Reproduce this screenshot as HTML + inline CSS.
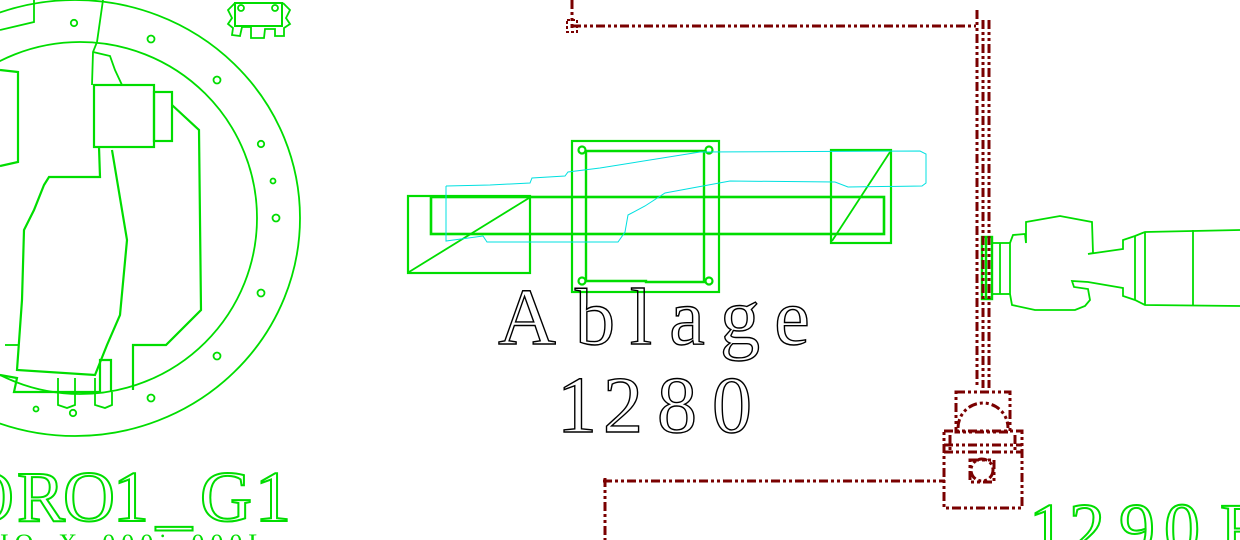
<!DOCTYPE html>
<html><head><meta charset="utf-8"><style>
html,body{margin:0;padding:0;background:#fff;width:1240px;height:540px;overflow:hidden}
svg{display:block}
</style></head><body>
<svg width="1240" height="540" viewBox="0 0 1240 540" xmlns="http://www.w3.org/2000/svg">
<g fill="none" stroke="#00dd00" stroke-width="1.8">
 <ellipse cx="75" cy="218" rx="225" ry="218"/>
 <ellipse cx="80" cy="218" rx="177" ry="176"/>
 <rect x="94" y="85" width="60" height="62" stroke-width="2.2"/>
 <rect x="154" y="92" width="18" height="49" stroke-width="2.2"/>
 <polyline points="172,105 199,130 201,310 166,345 133,345 133,390" stroke-width="2.2"/>
 <polyline points="103,0 97,42 93,52 92,85"/>
 <polyline points="0,30 34,22 34,0"/>
 <polyline points="0,70 18,72 18,162 0,166" stroke-width="2.2"/>
 <polyline points="93,52 110,56 115,70 122,85"/>
 <polyline points="99,147 100,177 49,177 44,185 34,210 24,230 22,300 17,370 95,375 107,345 120,315 127,240 112,150" stroke-width="2.2"/>
 <polyline points="0,375 17,378 14,392 100,392 100,360 111,360 111,392" stroke-width="2.2"/>
 <polyline points="5,345 18,345"/>
 <polyline points="58,378 58,405 67,408 75,405 75,378"/>
 <polyline points="95,378 95,405 105,408 112,405 112,392"/>
 <g stroke-width="1.8">
 <circle cx="74" cy="23" r="3.2"/><circle cx="151" cy="39" r="3.5"/><circle cx="217" cy="80" r="3.5"/>
 <circle cx="261" cy="144" r="3.2"/><circle cx="273" cy="181" r="2.5"/><circle cx="276" cy="218" r="3.5"/>
 <circle cx="261" cy="293" r="3.5"/><circle cx="217" cy="356" r="3.5"/><circle cx="151" cy="398" r="3.5"/>
 <circle cx="73" cy="413" r="3.2"/><circle cx="36" cy="409" r="2.5"/>
 </g>
 <rect x="235" y="3" width="47" height="23" stroke-width="2"/>
 <circle cx="241" cy="8" r="3"/><circle cx="275" cy="8" r="3"/>
 <polyline points="235,3 228,10 232,18 228,24 233,28 232,35 240,36 242,27 251,27 251,38 264,38 265,29 275,29 275,36 284,36 284,28 290,24 286,18 290,10 283,3"/>
 <rect x="408" y="196" width="122" height="77" stroke-width="2.2"/>
 <line x1="409" y1="272" x2="529" y2="198"/>
 <rect x="431" y="197" width="453" height="37" stroke-width="2.6"/>
 <rect x="572" y="141" width="147" height="151" stroke-width="2.2"/>
 <polyline points="586,151 704,151 704,282 646,282 646,281 586,281 586,151" stroke-width="2.4"/>
 <g stroke-width="2.2"><circle cx="582" cy="150" r="3.5"/><circle cx="709" cy="150" r="3.5"/><circle cx="582" cy="281" r="3.5"/><circle cx="709" cy="281" r="3.5"/></g>
 <rect x="831" y="150" width="60" height="93" stroke-width="2.2"/>
 <line x1="832" y1="241" x2="890" y2="152"/>
 <rect x="982" y="237" width="10" height="62" stroke-width="2.4"/>
 <line x1="986" y1="238" x2="986" y2="298" stroke-width="2.4"/>
 <rect x="992" y="243" width="18" height="51"/>
 <line x1="1000" y1="243" x2="1000" y2="294"/>
 <polyline points="1010,243 1013,235 1025,234 1026,243 1026,222 1060,216 1092,222 1093,253 1088,254 1123,249 1123,240 1135,236 1145,232 1240,230"/>
 <polyline points="1010,294 1012,305 1035,310 1075,310 1085,306 1090,300 1088,289 1074,287 1072,281 1088,282 1123,288 1123,296 1135,300 1145,305 1240,306"/>
 <line x1="1135" y1="236" x2="1135" y2="300"/>
 <line x1="1145" y1="232" x2="1145" y2="305"/>
 <line x1="1193" y1="230" x2="1193" y2="306"/>
</g>
<polyline fill="none" stroke="#00e0e0" stroke-width="1" points="446,186 490,185 530,183 532,178 565,176 568,172 600,168 700,152 920,151 926,154 926,183 922,186 848,187 835,182 730,181 665,193 645,206 628,215 625,232 618,242 487,242 483,236 446,241 446,186"/>
<g fill="none" stroke="#7a0000" stroke-width="3" stroke-dasharray="9,3,3,3,3,3">
 <line x1="572" y1="26" x2="976" y2="26"/>
 <line x1="572" y1="0" x2="572" y2="28"/>
 <line x1="977" y1="10" x2="977" y2="388"/>
 <line x1="983" y1="20" x2="983" y2="388"/>
 <line x1="989" y1="20" x2="989" y2="388"/>
 <line x1="603" y1="481" x2="945" y2="481"/>
 <line x1="605" y1="478" x2="605" y2="540"/>
 <rect x="956" y="392" width="54" height="40"/>
 <path d="M958,428 A25,25 0 0 1 1008,428"/>
 <rect x="944" y="431" width="78" height="77"/>
 <line x1="944" y1="445" x2="1022" y2="445"/>
 <line x1="944" y1="452" x2="1022" y2="452"/>
 <line x1="950" y1="435" x2="950" y2="450"/>
 <line x1="1015" y1="435" x2="1015" y2="450"/>
 <circle cx="982" cy="470" r="11"/>
 <rect x="970" y="460" width="24" height="22"/>
</g>
<rect x="567" y="20" width="10" height="12" fill="none" stroke="#7a0000" stroke-width="2" stroke-dasharray="3,2"/>
<g font-family="'Liberation Serif',serif" font-size="80" fill="none" stroke="#000" stroke-width="1.4" text-anchor="middle">
 <text x="527" y="344">A</text><text x="595" y="344">b</text><text x="641" y="344">l</text>
 <text x="687" y="344">a</text><text x="740" y="344">g</text><text x="792" y="344">e</text>
 <text x="577" y="432">1</text><text x="623" y="432">2</text><text x="677" y="432">8</text><text x="732" y="432">0</text>
</g>
<g font-family="'Liberation Serif',serif" font-size="72" fill="none" stroke="#00dd00" stroke-width="2" text-anchor="middle">
 <text x="-12" y="521">O</text><text x="41" y="521">R</text><text x="89" y="521">O</text>
 <text x="131" y="521">1</text><text x="174" y="521">_</text><text x="226" y="521">G</text><text x="273" y="521">1</text>
 <text x="1047" y="553">1</text><text x="1087" y="553">2</text><text x="1137" y="553">9</text><text x="1182" y="553">0</text><text x="1240" y="553">F</text>
</g>
<text x="0" y="552" font-family="'Liberation Serif',serif" font-size="26" fill="#00dd00" letter-spacing="6">IQ_X_000i_000L</text>
</svg>
</body></html>
